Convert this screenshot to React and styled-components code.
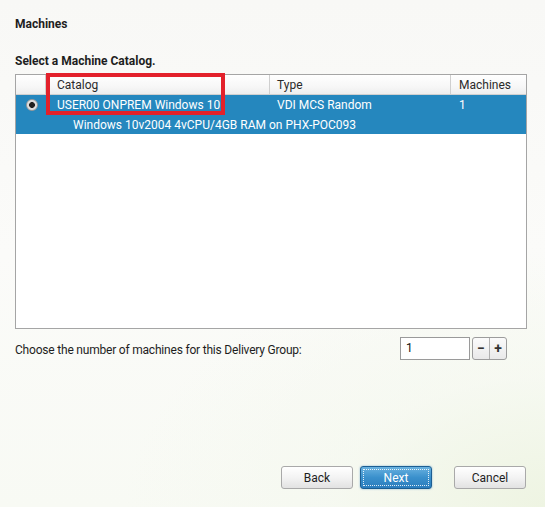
import React from "react";
import styled, { createGlobalStyle } from "styled-components";

const Global = createGlobalStyle`
  html, body { margin: 0; padding: 0; }
  body { font-family: "Roboto", "Noto Sans", sans-serif; font-size: 12px; color: #1e1e1e; }
`;

const Page = styled.div`
  width: 545px;
  height: 507px;
  box-sizing: border-box;
  padding: 16px 19px 18px 15px;
  display: flex;
  flex-direction: column;
  background:
    radial-gradient(ellipse 420px 260px at 100% 100%, #eef4e2 0%, rgba(244,248,238,0.6) 50%, rgba(250,250,248,0) 100%),
    linear-gradient(180deg, #f8f8f6 0%, #fbfbf9 50%, #f8faf4 100%);
  overflow: hidden;
`;

const Title = styled.div`
  font-weight: 700;
  line-height: 16px;
`;

const Subtitle = styled.div`
  margin-top: 21px;
  font-weight: 700;
  line-height: 16px;
`;

const TableBox = styled.div`
  position: relative;
  margin-top: 5px;
  height: 255px;
  width: 512px;
  box-sizing: border-box;
  border: 1px solid #a5a5a5;
  background: #ffffff;
`;

const Grid = styled.div`
  display: grid;
  grid-template-columns: 30px 224px 181px 1fr;
`;

const HeaderCell = styled.div`
  height: 20px;
  box-sizing: border-box;
  padding-left: ${p => p.$pad}px;
  padding-top: 1px;
  display: flex;
  align-items: center;
  background: linear-gradient(180deg, #ffffff 0%, #f7f7f7 60%, #eeeeee 100%);
  border-bottom: 1px solid #d0d0d0;
  border-right: ${p => (p.$last ? "none" : "1px solid #cfcfcf")};
  color: #2a2a2a;
`;

const Row = styled.div`
  display: grid;
  grid-template-columns: 30px 224px 181px 1fr;
  grid-template-rows: 20px 19px;
  background: #2587be;
  color: #ffffff;
`;

const Cell = styled.div`
  padding-left: ${p => p.$pad}px;
  display: flex;
  align-items: center;
`;

const Desc = styled.div`
  grid-column: 1 / 5;
  padding-left: 57px;
  display: flex;
  align-items: center;
`;

const Radio = styled.span`
  width: 12px;
  height: 12px;
  border-radius: 50%;
  box-sizing: border-box;
  border: 1px solid #9a9a9a;
  background: radial-gradient(circle, #202020 0 2.6px, #d8d8d8 3.2px, #f4f4f4 100%);
  margin-left: 10px;
`;

const Highlight = styled.div`
  position: absolute;
  left: 30px;
  top: -2px;
  width: 179px;
  height: 42px;
  box-sizing: border-box;
  border: 4px solid #e3212b;
  pointer-events: none;
`;

const CountRow = styled.div`
  margin-top: 7px;
  display: flex;
  align-items: center;
  height: 24px;
`;

const CountLabel = styled.div`
  width: 385px;
  padding-top: 3px;
  letter-spacing: -0.2px;
`;

const NumberInput = styled.div`
  width: 70px;
  height: 23px;
  box-sizing: border-box;
  border: 1px solid #9a9a9a;
  background: #fff;
  padding-left: 5px;
  display: flex;
  align-items: center;
  color: #111;
`;

const Stepper = styled.div`
  margin-left: 2px;
  display: flex;
  height: 23px;
  box-sizing: border-box;
  border: 1px solid #9c9c9c;
  border-radius: 3px;
  overflow: hidden;
  background: linear-gradient(180deg, #fbfbfb 0%, #e9e9e9 100%);
`;

const StepButton = styled.div`
  width: 16px;
  display: flex;
  align-items: center;
  justify-content: center;
  font-weight: 700;
  font-size: 14px;
  color: #333;
  border-right: ${p => (p.$first ? "1px solid #b0b0b0" : "none")};
`;

const Spacer = styled.div`
  flex: 1;
`;

const ButtonRow = styled.div`
  display: flex;
  justify-content: flex-end;
  align-items: center;
`;

const Button = styled.div`
  width: 72px;
  height: 23px;
  box-sizing: border-box;
  border-radius: 3px;
  display: flex;
  align-items: center;
  justify-content: center;
  margin-left: ${p => p.$gap}px;
  border: 1px solid ${p => (p.$primary ? "#1c5e92" : "#a9a9a9")};
  background: ${p =>
    p.$primary
      ? "linear-gradient(180deg, #6ab2e0 0%, #3a90cc 50%, #2a7dbd 100%)"
      : "linear-gradient(180deg, #ffffff 0%, #f3f3f3 50%, #e2e2e2 100%)"};
  color: ${p => (p.$primary ? "#ffffff" : "#1e1e1e")};
  position: relative;
  box-shadow: ${p => (p.$primary ? "0 0 2px rgba(40,120,190,0.6)" : "none")};
`;

const Focus = styled.span`
  position: absolute;
  inset: 2px;
  border: 1px dotted rgba(255, 255, 255, 0.85);
  pointer-events: none;
`;

export default function App() {
  return (
    <>
      <Global />
      <Page>
        <Title>Machines</Title>
        <Subtitle>Select a Machine Catalog.</Subtitle>
        <TableBox>
          <Grid>
            <HeaderCell $pad={0} />
            <HeaderCell $pad={11}>Catalog</HeaderCell>
            <HeaderCell $pad={7}>Type</HeaderCell>
            <HeaderCell $pad={8} $last>Machines</HeaderCell>
          </Grid>
          <Row>
            <Cell $pad={0}><Radio /></Cell>
            <Cell $pad={11}>USER00 ONPREM Windows 10</Cell>
            <Cell $pad={7}>VDI MCS Random</Cell>
            <Cell $pad={8}>1</Cell>
            <Desc>Windows 10v2004 4vCPU/4GB RAM on PHX-POC093</Desc>
          </Row>
          <Highlight />
        </TableBox>
        <CountRow>
          <CountLabel>Choose the number of machines for this Delivery Group:</CountLabel>
          <NumberInput>1</NumberInput>
          <Stepper>
            <StepButton $first>−</StepButton>
            <StepButton>+</StepButton>
          </Stepper>
        </CountRow>
        <Spacer />
        <ButtonRow>
          <Button $gap={0}>Back</Button>
          <Button $gap={7} $primary>Next<Focus /></Button>
          <Button $gap={22}>Cancel</Button>
        </ButtonRow>
      </Page>
    </>
  );
}
